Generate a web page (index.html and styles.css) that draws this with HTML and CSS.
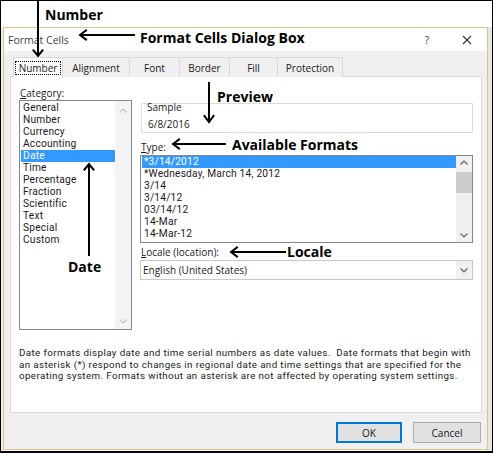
FILE: index.html
```html
<!DOCTYPE html>
<html>
<head>
<meta charset="utf-8">
<link rel="stylesheet" href="styles.css">
</head>
<body>
<div class="frame">
  <div class="top"></div>
  <div class="main">
    <div class="gutter-left"></div>
    <div class="dialog">
      <div class="titlebar">
        <span class="title">Format Cells</span>
        <span class="help">?</span>
        <svg class="close" width="10" height="10" viewBox="0 0 10 10"><path d="M1 1L9 9M9 1L1 9" stroke="#333" stroke-width="1.1" fill="none"/></svg>
      </div>
      <div class="content">
        <div class="tabs">
          <div class="tab tab-active"><span class="focus">Number</span></div>
          <div class="tab tab-align">Alignment</div>
          <div class="tab tab-font">Font</div>
          <div class="tab tab-border">Border</div>
          <div class="tab tab-fill">Fill</div>
          <div class="tab tab-prot">Protection</div>
        </div>
        <div class="panel">
          <div class="columns">
            <div class="col-left">
              <div class="label label-cat"><u>C</u>ategory:</div>
              <div class="listbox cat-list">
                <div class="items">
                  <div class="item">General</div>
                  <div class="item">Number</div>
                  <div class="item">Currency</div>
                  <div class="item">Accounting</div>
                  <div class="item item-sel">Date</div>
                  <div class="item">Time</div>
                  <div class="item">Percentage</div>
                  <div class="item">Fraction</div>
                  <div class="item">Scientific</div>
                  <div class="item">Text</div>
                  <div class="item">Special</div>
                  <div class="item">Custom</div>
                </div>
                <div class="scrollbar scroll-disabled">
                  <svg width="16" height="10" viewBox="0 0 16 10"><path d="M4.5 6.5L8 3L11.5 6.5" stroke="#c4c4c4" stroke-width="1.2" fill="none"/></svg>
                  <svg width="16" height="10" viewBox="0 0 16 10"><path d="M4.5 3.5L8 7L11.5 3.5" stroke="#c4c4c4" stroke-width="1.2" fill="none"/></svg>
                </div>
              </div>
            </div>
            <div class="col-right">
              <div class="group">
                <div class="group-label">Sample</div>
                <div class="group-value">6/8/2016</div>
              </div>
              <div class="label label-type"><u>T</u>ype:</div>
              <div class="listbox type-list">
                <div class="items">
                  <div class="item item-sel">*3/14/2012</div>
                  <div class="item">*Wednesday, March 14, 2012</div>
                  <div class="item">3/14</div>
                  <div class="item">3/14/12</div>
                  <div class="item">03/14/12</div>
                  <div class="item">14-Mar</div>
                  <div class="item">14-Mar-12</div>
                </div>
                <div class="scrollbar">
                  <svg width="16" height="14" viewBox="0 0 16 14"><path d="M4.5 8.5L8 5L11.5 8.5" stroke="#606060" stroke-width="1.2" fill="none"/></svg>
                  <div class="thumb"></div>
                  <div class="spacer"></div>
                  <svg width="16" height="14" viewBox="0 0 16 14"><path d="M4.5 5.5L8 9L11.5 5.5" stroke="#606060" stroke-width="1.2" fill="none"/></svg>
                </div>
              </div>
              <div class="label label-locale"><u>L</u>ocale (location):</div>
              <div class="dropdown">
                <span class="dd-text">English (United States)</span>
                <span class="dd-btn"><svg width="16" height="18" viewBox="0 0 16 18"><path d="M4.5 7.5L8 11L11.5 7.5" stroke="#606060" stroke-width="1.2" fill="none"/></svg></span>
              </div>
            </div>
          </div>
          <p class="desc">Date formats display date and time serial numbers as date values.&nbsp; Date formats that begin with<br>an asterisk (*) respond to changes in regional date and time settings that are specified for the<br>operating system. Formats without an asterisk are not affected by operating system settings.</p>
        </div>
        <div class="buttons">
          <div class="btn btn-ok">OK</div>
          <div class="btn btn-cancel">Cancel</div>
        </div>
      </div>
    </div>
    <div class="gutter-right"></div>
  </div>

  <svg class="arrows" width="493" height="453" viewBox="0 0 493 453">
    <g stroke="#000" stroke-width="2" fill="none" stroke-linecap="square">
      <path d="M38 0V55"/><path d="M33.5 50.5L38 56L42.5 50.5"/>
      <path d="M134 35H81"/><path d="M86 30.5L80 35L86 39.5"/>
      <path d="M209 83V121"/><path d="M204.5 116L209 122L213.5 116"/>
      <path d="M225 144H174"/><path d="M179 139.5L173 144L179 148.5"/>
      <path d="M285 252H232"/><path d="M237 247.5L231 252L237 256.5"/>
      <path d="M89 255V165"/><path d="M84.5 169.5L89 164L93.5 169.5"/>
    </g>
  </svg>
  <span class="note note-number">Number</span>
  <span class="note note-dialog">Format Cells Dialog Box</span>
  <span class="note note-preview">Preview</span>
  <span class="note note-formats">Available Formats</span>
  <span class="note note-locale">Locale</span>
  <span class="note note-date">Date</span>
</div>
</body>
</html>
```

FILE: styles.css
```css
* { box-sizing: border-box; }
body { margin: 0; font-family: "Open Sans", "Noto Sans", sans-serif; font-size: 10px; color: #1a1a1a; }

.frame {
  position: relative;
  width: 493px;
  height: 453px;
  border: 1px solid #000;
  border-bottom-width: 2px;
  background: #fff;
  overflow: hidden;
}
.top { height: 26px; }
.main { display: flex; height: 424px; }
.gutter-left { width: 2px; background: #f2f2f2; }
.gutter-right { flex: 1; background: #e6e6e6; }

.dialog {
  width: 485px;
  height: 423px;
  border: 1px solid #d9c38f;
  background: #f0f0f0;
  display: flex;
  flex-direction: column;
}
.titlebar {
  height: 23px;
  background: #fff;
  display: flex;
  align-items: center;
  padding-left: 4px;
}
.title { font-size: 10.5px; color: #404040; line-height: 14px; }
.help { margin-left: auto; font-size: 10px; color: #333; margin-right: 33px; }
.close { margin-right: 15px; }

.content { padding: 6px 5px 0 6px; }

.tabs { display: flex; height: 20px; padding-left: 3px; }
.tab {
  height: 20px;
  border: 1px solid #d9d9d9;
  border-bottom: none;
  border-left: none;
  background: #f0f0f0;
  display: flex;
  align-items: center;
  justify-content: center;
  line-height: 12px;
  color: #1a1a1a;
}
.tab-active {
  width: 50px;
  background: #fff;
  border-left: 1px solid #d9d9d9;
  position: relative;
  z-index: 1;
  height: 21px;
}
.focus { border: 1px dotted #000; padding: 0 3px; line-height: 12px; }
.tab-align { width: 67px; }
.tab-font { width: 50px; }
.tab-border { width: 50px; }
.tab-fill { width: 48px; }
.tab-prot { width: 65px; }

.panel {
  width: 472px;
  height: 337px;
  margin-top: -1px;
  background: #fff;
  border: 1px solid #d9d9d9;
  padding: 10px 8px 0 8px;
}
.columns { display: grid; grid-template-columns: 113px 333px; column-gap: 8px; }
.label { line-height: 12px; padding-left: 1px; }
.label u { text-decoration-thickness: 1px; text-underline-offset: 1px; }

.listbox {
  border: 1px solid #828790;
  display: flex;
  background: #fff;
}
.items { flex: 1; padding: 1px 0 0 1px; }
.item {
  line-height: 12px;
  height: 12px;
  padding-left: 2px;
  white-space: nowrap;
  font-family: "Roboto", "Open Sans", sans-serif;
  font-size: 10.2px;
  letter-spacing: 0.2px;
}
.item-sel { background: #3399ff; color: #fff; }

.cat-list { margin-top: 1px; height: 230px; }
.cat-list .items { padding-top: 1px; }
.scrollbar {
  width: 16px;
  background: #f0f0f0;
  display: flex;
  flex-direction: column;
  justify-content: space-between;
}
.scroll-disabled { background: #f4f4f4; padding: 5px 0 3px; }

.group {
  margin-top: 16px;
  margin-left: 1px;
  border: 1px solid #dcdcdc;
  padding: 0 0 2px 6px;
}
.group-label { margin: -3px 0 0 -1px; line-height: 12px; }
.group-value { margin-top: 5px; line-height: 12px; }

.label-type { margin-top: 8px; }
.type-list { margin-top: 2px; height: 88px; }
.type-list .items { padding-top: 0; }
.type-list .scrollbar { justify-content: flex-start; }
.thumb { height: 21px; width: 16px; background: #cdcdcd; margin-top: 2px; }
.spacer { flex: 1; }

.label-locale { margin-top: 3px; }
.dropdown {
  margin-top: 2px;
  height: 20px;
  border: 1px solid #c8c8c8;
  display: flex;
  align-items: center;
  background: #fff;
}
.dd-text { flex: 1; padding-left: 2px; line-height: 12px; }
.dd-btn { width: 16px; height: 18px; background: #f0f0f0; display: flex; }

.desc {
  margin: 17px 0 0 0;
  line-height: 11.5px;
  white-space: nowrap;
  font-family: "Roboto", "Open Sans", sans-serif;
  font-size: 9.8px;
  letter-spacing: 0.38px;
}

.buttons {
  margin-top: 9px;
  display: flex;
  justify-content: flex-end;
  gap: 11px;
  padding-right: 1px;
}
.btn {
  height: 21px;
  display: flex;
  align-items: center;
  justify-content: center;
  background: #e1e1e1;
  border: 1px solid #adadad;
}
.btn-ok { width: 66px; border: 2px solid #0078d7; }
.btn-cancel { width: 68px; }

.arrows { position: absolute; left: -1px; top: -1px; pointer-events: none; z-index: 5; }
.note {
  position: absolute;
  font-family: "Open Sans", sans-serif;
  font-weight: 700;
  font-size: 14px;
  line-height: 16px;
  color: #000;
  white-space: nowrap;
  z-index: 6;
}
.note-number { left: 44px; top: 6px; }
.note-dialog { left: 139px; top: 29px; }
.note-preview { left: 216px; top: 88px; }
.note-formats { left: 231px; top: 136px; }
.note-locale { left: 286px; top: 243px; }
.note-date { left: 67px; top: 258px; }
```
